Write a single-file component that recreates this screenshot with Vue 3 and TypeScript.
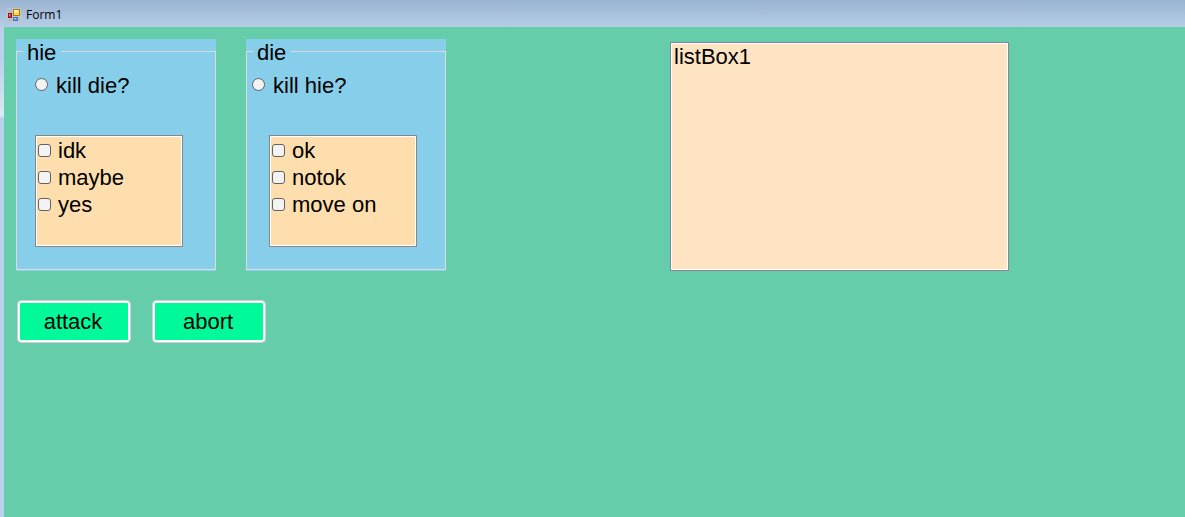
<script setup lang="ts">
import { ref } from 'vue'

interface Group {
  id: string
  title: string
  radio: string
  items: string[]
}

const groups: Group[] = [
  { id: 'hie', title: 'hie', radio: 'kill die?', items: ['idk', 'maybe', 'yes'] },
  { id: 'die', title: 'die', radio: 'kill hie?', items: ['ok', 'notok', 'move on'] },
]

const targets = ref<Record<string, string>>({ hie: '', die: '' })
const checked = ref<string[]>([])
const log = ref<string[]>(['listBox1'])

function attack() {
  log.value.push(...Object.values(targets.value).filter(Boolean), ...checked.value)
}

function abort() {
  targets.value = { hie: '', die: '' }
  checked.value = []
}
</script>

<template>
  <div class="window">
    <header class="titlebar">
      <svg class="icon" viewBox="0 0 14 14" aria-hidden="true">
        <rect x="0.5" y="0.5" width="13" height="13" fill="#aebccf" stroke="#c3c3c3" />
        <path d="M5.5 0V14M0 5.5H5.5M0 10.5H5.5M5.5 8.5H14M11.5 8.5V14" stroke="#c3c3c3" fill="none" />
        <rect x="1.5" y="5.5" width="3" height="4" fill="#d83a30" stroke="#961414" />
        <rect x="2" y="6" width="1" height="2" fill="#f09080" />
        <rect x="6.5" y="1.5" width="6" height="6" fill="#ffd040" stroke="#b07c18" />
        <rect x="7" y="2" width="4" height="3" fill="#fff0a0" />
        <rect x="6.5" y="9.5" width="4" height="3" fill="#6ba0f5" stroke="#3c6cc8" />
        <rect x="7" y="10" width="2" height="1" fill="#b4d2ff" />
      </svg>
      <span class="title">Form1</span>
    </header>

    <main class="client">
      <div class="top">
        <div class="groups">
          <div v-for="g in groups" :key="g.id" class="group" :class="g.id">
            <fieldset>
              <legend>{{ g.title }}</legend>
              <label class="row radio">
                <input v-model="targets[g.id]" type="radio" :name="g.id" :value="g.radio" />
                <span>{{ g.radio }}</span>
              </label>
              <ul class="checklist">
                <li v-for="item in g.items" :key="item">
                  <label class="row">
                    <input v-model="checked" type="checkbox" :value="item" />
                    <span>{{ item }}</span>
                  </label>
                </li>
              </ul>
            </fieldset>
          </div>
        </div>
        <select class="listbox" size="8" multiple aria-label="listBox1">
          <option v-for="(line, i) in log" :key="i">{{ line }}</option>
        </select>
      </div>
      <div class="actions">
        <button type="button" @click="attack">attack</button>
        <button type="button" @click="abort">abort</button>
      </div>
    </main>
  </div>
</template>

<style>
body {
  margin: 0;
}
</style>

<style scoped>
.window {
  box-sizing: border-box;
  min-height: 100vh;
  display: flex;
  flex-direction: column;
  padding-left: 4px;
  background: linear-gradient(#99b4d1 0, #b9d1ea 27px, #b9d1ea 60px, #dce8f5 116px, #b9d1ea 118px);
  font-family: "Liberation Sans", Arial, sans-serif;
  font-size: 22px;
  line-height: 27px;
  color: #000;
}

.titlebar {
  height: 27px;
  display: flex;
  align-items: center;
  gap: 5px;
  margin-left: -4px;
  padding: 3px 0 0 7px;
  box-sizing: border-box;
  background: linear-gradient(#99b4d1, #b5cde7);
}

.icon {
  flex: none;
  width: 14px;
  height: 14px;
}

.title {
  font-family: "Segoe UI", "Open Sans", "Noto Sans", sans-serif;
  font-size: 12px;
  line-height: 16px;
}

.client {
  flex: 1;
  padding: 12px 0 12px 12px;
  background: #66cdaa;
}

.top {
  display: grid;
  grid-template-columns: max-content 224fr 339fr 176fr;
}

.groups {
  display: flex;
  gap: 30px;
}

.group {
  box-sizing: border-box;
  width: 200px;
  height: 232px;
  padding-bottom: 1px;
  background: #87ceeb;
}

fieldset {
  box-sizing: border-box;
  height: 100%;
  min-width: 0;
  margin: 0;
  padding: 8px 0 0 5px;
  border: 1px solid #dcdcdc;
}

legend {
  margin-left: 1px;
  padding: 2px 5px 0 4px;
  line-height: 23px;
}

.row {
  display: flex;
  align-items: center;
  gap: 7px;
}

.radio {
  gap: 8px;
}

.radio input {
  margin-bottom: 2px;
}

.hie .radio,
.hie .checklist {
  margin-left: 13px;
}

.die .checklist {
  margin-left: 17px;
}

.checklist {
  box-sizing: border-box;
  width: 148px;
  height: 112px;
  margin: 36px 0 0;
  padding: 1px 1px 0;
  list-style: none;
  background: #ffdead;
  border: 1px solid #828790;
  box-shadow: inset 0 0 0 1px #fff;
}

input {
  appearance: none;
  box-sizing: border-box;
  flex: none;
  width: 13px;
  height: 13px;
  margin: 0;
  background: #f3f3f3;
  border: 1px solid #626262;
}

input[type="checkbox"] {
  margin-left: 1px;
  border-radius: 3px;
}

input[type="radio"] {
  border-radius: 50%;
}

input[type="radio"]:checked {
  background: radial-gradient(#0067c0 3px, #f3f3f3 4px);
}

input[type="checkbox"]:checked {
  background: #0067c0;
}

.listbox {
  grid-column: 3;
  box-sizing: border-box;
  width: 100%;
  height: 229px;
  margin: 3px 0 0;
  padding: 1px;
  overflow: hidden;
  font: inherit;
  color: inherit;
  background: #ffe4c4;
  border: 1px solid #828790;
  border-radius: 0;
  box-shadow: inset 0 0 0 1px #fff;
  outline: none;
}

.listbox option {
  min-height: 24px;
  padding: 0 2px;
  line-height: 24px;
}

.actions {
  display: flex;
  gap: 21px;
  margin: 29px 0 0 1px;
}

button {
  box-sizing: border-box;
  width: 114px;
  height: 43px;
  padding: 0 2px 0 0;
  font: inherit;
  color: inherit;
  background: #00fa9a;
  border: 1px solid #d0d0d0;
  border-radius: 4px;
  box-shadow: inset 0 0 0 2px #fff;
}
</style>
